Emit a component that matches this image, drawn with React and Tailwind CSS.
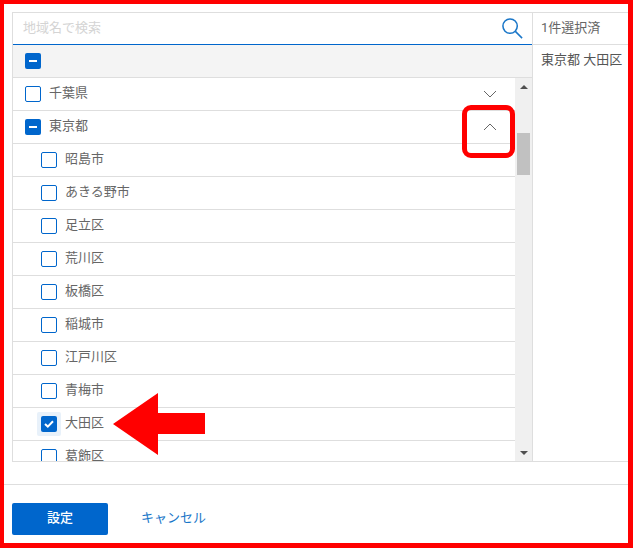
const cities = ['昭島市', 'あきる野市', '足立区', '荒川区', '板橋区', '稲城市', '江戸川区', '青梅市'];

const Box = ({ state }) => {
  if (state === 'minus') {
    return (
      <span className="w-4 h-4 rounded-[2px] bg-[#0066cc] flex items-center justify-center shrink-0">
        <span className="w-2 h-[2px] bg-white" />
      </span>
    );
  }
  if (state === 'check') {
    return (
      <span className="w-6 h-6 -mx-1 rounded-[2px] bg-[#e8f1fa] flex items-center justify-center shrink-0">
        <span className="w-4 h-4 rounded-[2px] bg-[#0066cc] flex items-center justify-center">
          <svg width="10" height="8" viewBox="0 0 10 8" fill="none" stroke="#fff" strokeWidth="2">
            <path d="M1 4l2.8 2.6L9 1.2" />
          </svg>
        </span>
      </span>
    );
  }
  return <span className="w-4 h-4 rounded-[2px] border border-[#0066cc] bg-white shrink-0" />;
};

const Row = ({ label, state, indent, chevron }) => (
  <div className={`h-[33px] shrink-0 border-b border-[#dedede] flex items-center gap-2 pr-[18px] ${indent ? 'pl-7' : 'pl-3'}`}>
    <Box state={state} />
    <span className="text-[13px] text-[#666666] pb-[2px]">{label}</span>
    {chevron && (
      <svg className="ml-auto" width="14" height="8" viewBox="0 0 14 8" fill="none" stroke="#666" strokeWidth="1">
        <path d={chevron === 'down' ? 'M1 1l6 6 6-6' : 'M1 7l6-6 6 6'} />
      </svg>
    )}
  </div>
);

export default function App() {
  return (
    <div className="relative w-[633px] h-[548px] overflow-hidden bg-white border-4 border-r-[5px] border-b-[5px] border-[#ff0000] pt-2 pl-2 flex flex-col font-['Roboto','Noto_Sans_CJK_JP',sans-serif]">
      <div className="h-[450px] shrink-0 flex border-t border-b border-[#dedede]">
        {/* left column */}
        <div className="w-[521px] shrink-0 flex flex-col border-l border-r border-[#dedede]">
          <div className="h-[32px] shrink-0 border-b-[1.5px] border-[#0066cc] flex items-center justify-between pl-[10px] pr-2">
            <span className="text-[13px] text-[#d4d4d4] pb-[2px]">地域名で検索</span>
            <svg width="23" height="23" viewBox="0 0 24 24" fill="none" stroke="#1976c8" strokeWidth="1.6">
              <circle cx="9.5" cy="9.5" r="7.5" />
              <path d="M15 15l7 7" />
            </svg>
          </div>
          <div className="h-[33px] shrink-0 bg-[#f4f4f4] border-b border-[#dedede] flex items-center pl-3">
            <Box state="minus" />
          </div>
          <div className="flex-1 min-h-0 flex">
            <div className="flex-1 min-w-0 overflow-hidden flex flex-col">
              <Row label="千葉県" chevron="down" />
              <Row label="東京都" state="minus" chevron="up" />
              {cities.map((c) => (
                <Row key={c} label={c} indent />
              ))}
              <Row label="大田区" state="check" indent />
              <Row label="葛飾区" indent />
            </div>
            {/* scrollbar */}
            <div className="w-[17px] shrink-0 bg-[#f0f0f0] flex flex-col items-center">
              <div className="h-[17px] shrink-0 flex items-center justify-center">
                <span className="w-0 h-0 border-x-[4px] border-x-transparent border-b-[4px] border-b-[#505050]" />
              </div>
              <div className="mt-[38px] w-[13px] h-[42px] bg-[#c1c1c1]" />
              <div className="mt-auto h-[17px] shrink-0 flex items-center justify-center">
                <span className="w-0 h-0 border-x-[4px] border-x-transparent border-t-[4px] border-t-[#505050]" />
              </div>
            </div>
          </div>
        </div>
        {/* selected column */}
        <div className="flex-1 min-w-0 flex flex-col">
          <div className="h-[32px] shrink-0 border-b border-[#dedede] flex items-center pl-2 pb-[2px] text-[13px] text-[#666666]">1件選択済</div>
          <div className="pl-2 pt-[5px] text-[13px] text-[#555555] whitespace-nowrap">東京都&nbsp;大田区</div>
        </div>
      </div>
      <div className="h-[23px] shrink-0 border-b border-[#dedede] -ml-2" />
      <div className="flex items-center gap-[33px] mt-[18px]">
        <button className="w-24 h-8 rounded-[2px] bg-[#0066cc] text-white text-[13px] font-medium pb-[2px]">設定</button>
        <span className="text-[13px] text-[#1976c8] pb-[2px]">キャンセル</span>
      </div>

      {/* annotations */}
      <div className="absolute left-[458px] top-[101px] w-[53px] h-[53px] rounded-[9px] border-[5px] border-[#ff0000]" />
      <svg className="absolute left-[109px] top-[389px]" width="93" height="64" viewBox="0 0 93 64" fill="#ff0000">
        <path d="M0 31L45 0V20H92V41H45V62Z" />
      </svg>
    </div>
  );
}
